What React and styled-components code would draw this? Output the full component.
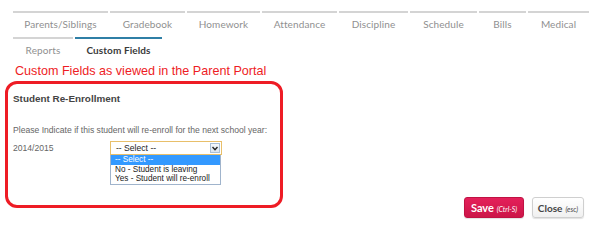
import React from "react";
import styled, { createGlobalStyle } from "styled-components";

const Global = createGlobalStyle`
  html, body { margin: 0; padding: 0; background: #fff; }
  body { width: 600px; height: 231px; overflow: hidden; font-family: "Liberation Sans", Arial, sans-serif; }
`;

const Page = styled.div`
  width: 600px;
  height: 231px;
  position: relative;
  box-sizing: border-box;
  padding-top: 11px;
`;

const TabRow = styled.div`
  display: flex;
  gap: 2px;
  padding-left: 13px;
`;

const Tab = styled.div`
  width: ${(p) => p.w}px;
  border-top: 2px solid ${(p) => (p.active ? "#2f7fa6" : "#d4d4d4")};
  height: 26px;
  padding-bottom: 2px;
  box-sizing: border-box;
  display: flex;
  align-items: center;
  justify-content: center;
  font-family: "Lato", "Liberation Sans", sans-serif;
  font-size: 10px;
  font-weight: ${(p) => (p.active ? 700 : 400)};
  color: ${(p) => (p.active ? "#3a3a3a" : "#909090")};
  letter-spacing: 0.1px;
`;

const Heading = styled.div`
  color: #ee1c25;
  font-family: "Liberation Sans", Arial, sans-serif;
  font-size: 12.6px;
  padding-left: 15px;
  line-height: 16px;
  height: 18px;
`;

const Box = styled.div`
  margin-left: 5px;
  width: 278px;
  height: 127px;
  box-sizing: border-box;
  border: 3px solid #ee1c25;
  border-radius: 12px;
  padding: 8px 0 0 5px;
  color: #666;
  font-family: "Liberation Sans", Arial, sans-serif;
  font-size: 8.6px;
`;

const Title = styled.div`
  font-weight: 700;
  font-size: 9.9px;
  color: #444;
  line-height: 14px;
`;

const Prompt = styled.div`
  margin-top: 18px;
  line-height: 12px;
  white-space: nowrap;
`;

const FieldRow = styled.div`
  display: flex;
  margin-top: 5px;
`;

const FieldLabel = styled.div`
  width: 97px;
  line-height: 14px;
`;

const SelectWrap = styled.div`
  width: 112px;
`;

const SelectBox = styled.div`
  height: 14px;
  box-sizing: border-box;
  border: 1px solid #e8bf6a;
  background: #fff;
  font-size: 8.6px;
  color: #222;
  padding-left: 5px;
  line-height: 12px;
  display: flex;
  justify-content: space-between;
  align-items: center;
`;

const Arrow = styled.div`
  width: 10px;
  height: 10px;
  margin-right: 1px;
  box-sizing: border-box;
  border: 1px solid #a9bfd6;
  background: linear-gradient(#f4f8fc, #d9e5f2);
  display: flex;
  align-items: center;
  justify-content: center;
`;

const List = styled.div`
  width: 111px;
  box-sizing: border-box;
  border: 1px solid #a0b4cc;
  border-top: none;
  font-size: 8.2px;
  color: #222;
`;

const Option = styled.div`
  line-height: 9.6px;
  padding-left: 4px;
  white-space: nowrap;
  background: ${(p) => (p.sel ? "#3399ff" : "#fff")};
  color: ${(p) => (p.sel ? "#fff" : "#222")};
`;

const Buttons = styled.div`
  position: absolute;
  left: 464px;
  top: 197px;
  display: flex;
  gap: 8px;
`;

const Btn = styled.div`
  width: ${(p) => p.w}px;
  height: 21px;
  box-sizing: border-box;
  border-radius: 3px;
  display: flex;
  align-items: center;
  justify-content: center;
  font-family: "Lato", "Liberation Sans", sans-serif;
  font-weight: 700;
  font-size: ${(p) => (p.primary ? 11 : 10)}px;
  background: ${(p) => (p.primary ? "linear-gradient(#e4205a, #cc1548)" : "linear-gradient(#ffffff, #f0f0f0)")};
  color: ${(p) => (p.primary ? "#fff" : "#444")};
  border: 1px solid ${(p) => (p.primary ? "#c01243" : "#cfcfcf")};
  box-shadow: 0 1px 1px rgba(0,0,0,0.12);
  i {
    font-size: 7px;
    font-weight: 400;
    margin-left: 3px;
    margin-top: 2px;
  }
`;

const tabs1 = [
  ["Parents/Siblings", 95],
  ["Gradebook", 75],
  ["Homework", 73],
  ["Attendance", 75],
  ["Discipline", 69],
  ["Schedule", 67],
  ["Bills", 47],
  ["Medical", 61],
];

export default function App() {
  return (
    <Page>
      <Global />
      <TabRow>
        {tabs1.map(([t, w]) => (
          <Tab key={t} w={w}>{t}</Tab>
        ))}
      </TabRow>
      <TabRow>
        <Tab w={60}>Reports</Tab>
        <Tab w={87} active>Custom Fields</Tab>
      </TabRow>
      <Heading>Custom Fields as viewed in the Parent Portal</Heading>
      <Box>
        <Title>Student Re-Enrollment</Title>
        <Prompt>Please Indicate if this student will re-enroll for the next school year:</Prompt>
        <FieldRow>
          <FieldLabel>2014/2015</FieldLabel>
          <SelectWrap>
            <SelectBox>
              <span>-- Select --</span>
              <Arrow>
                <svg width="6" height="5" viewBox="0 0 6 5">
                  <path d="M0.5 1 L3 3.8 L5.5 1" fill="none" stroke="#222" strokeWidth="1.4" />
                </svg>
              </Arrow>
            </SelectBox>
            <List>
              <Option sel>-- Select --</Option>
              <Option>No - Student is leaving</Option>
              <Option>Yes - Student will re-enroll</Option>
            </List>
          </SelectWrap>
        </FieldRow>
      </Box>
      <Buttons>
        <Btn primary w={60}>Save<i>(Ctrl-S)</i></Btn>
        <Btn w={52}>Close<i>(esc)</i></Btn>
      </Buttons>
    </Page>
  );
}
